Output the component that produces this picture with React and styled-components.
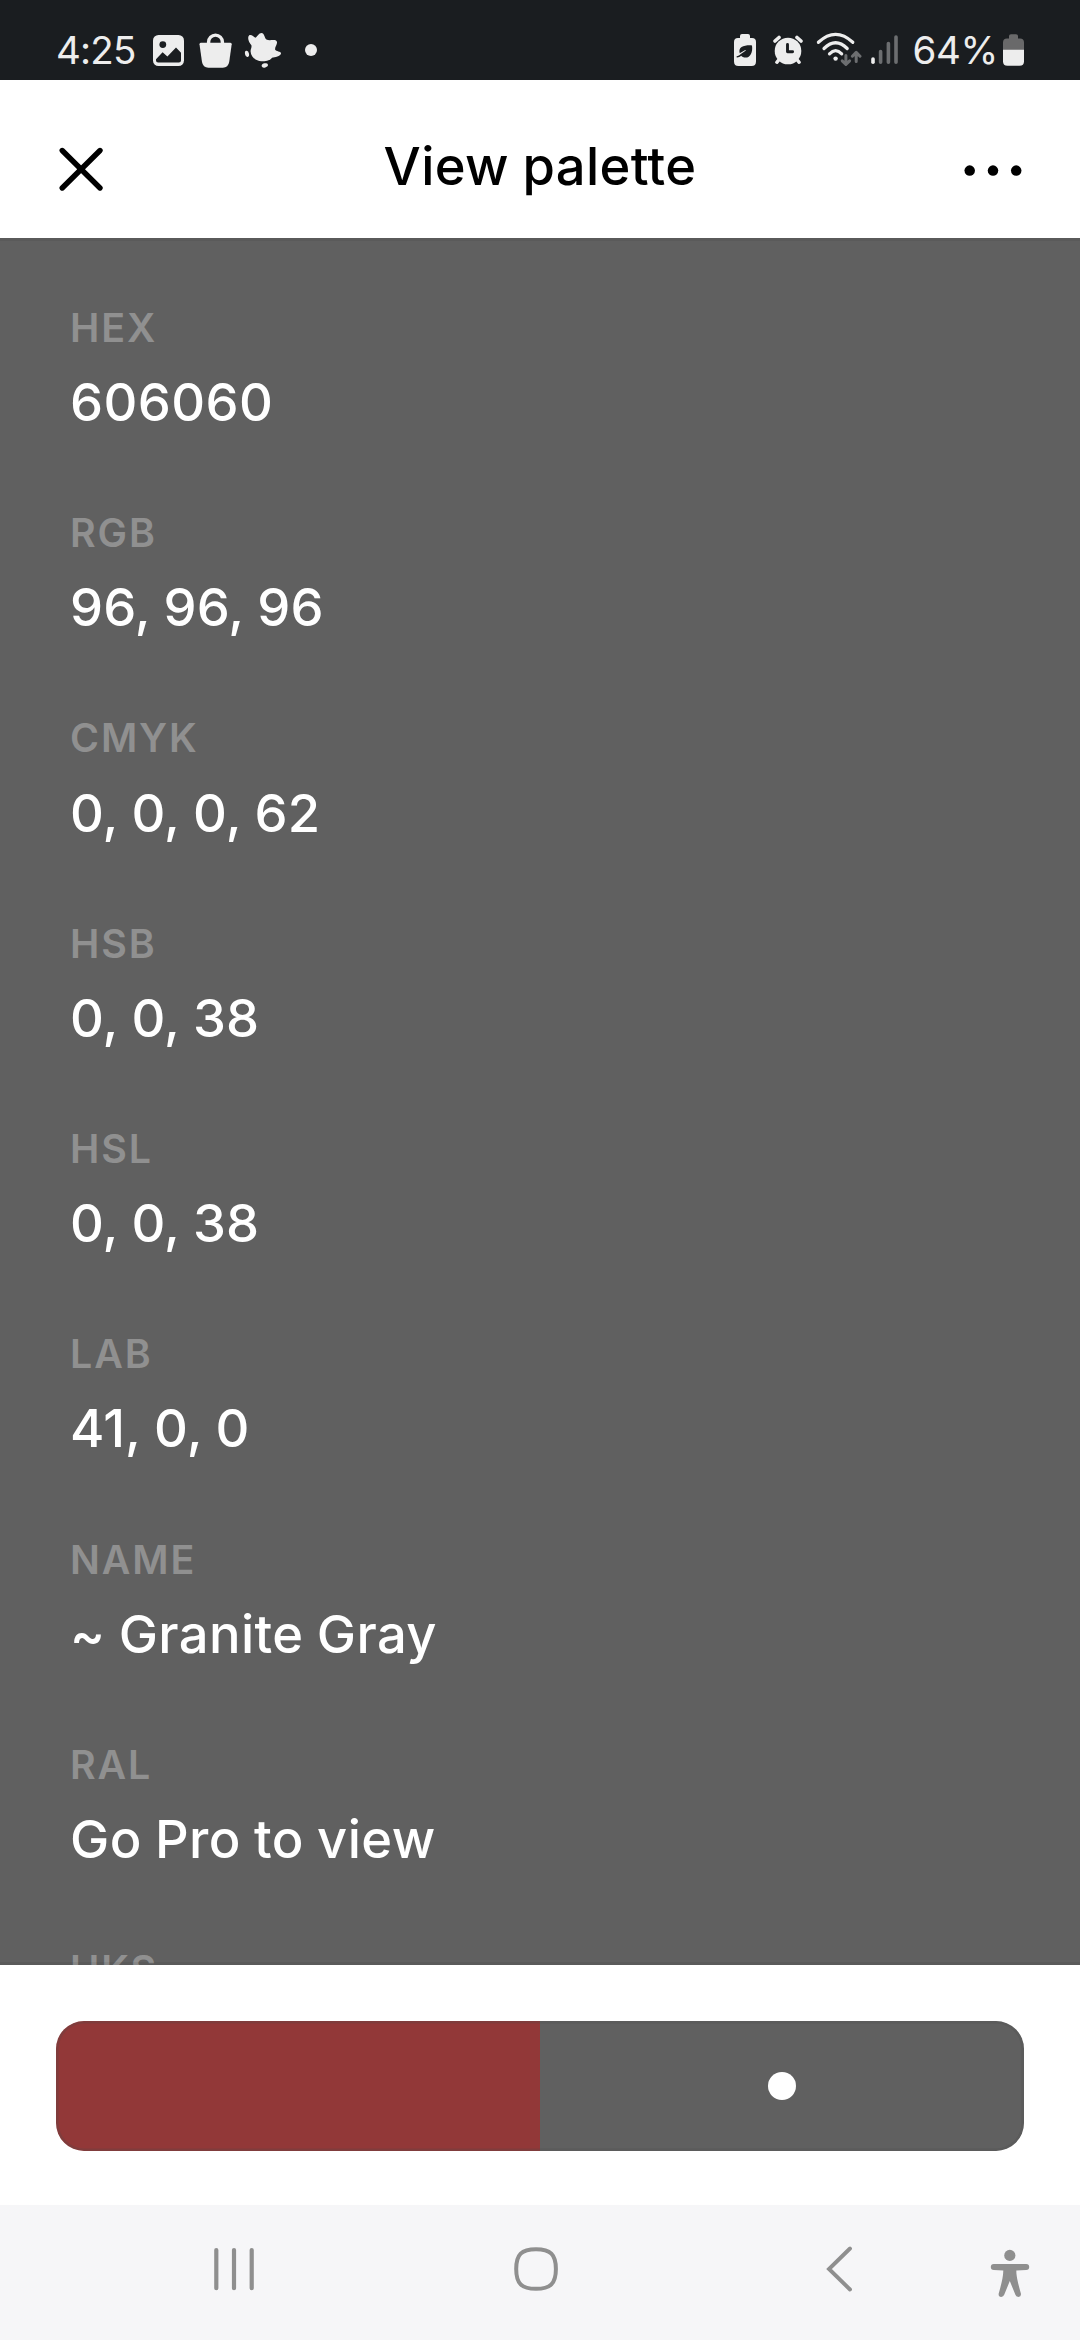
import React from "react";
import styled, { createGlobalStyle } from "styled-components";

const GlobalStyle = createGlobalStyle`
  *, *::before, *::after { box-sizing: border-box; }
  html, body { margin: 0; padding: 0; background: #ffffff; }
  svg { display: block; flex: none; }
  button { border: 0; padding: 0; background: none; color: inherit; }
`;

const Screen = styled.div`
  width: 1080px;
  height: 2340px;
  display: flex;
  flex-direction: column;
  overflow: hidden;
  background: #ffffff;
  font-family: Inter, "Liberation Sans", sans-serif;
`;

const StatusBar = styled.header`
  flex: none;
  height: 80px;
  padding: 20px 56px 0;
  display: flex;
  justify-content: space-between;
  background: #1a1d20;
  color: #ededed;
`;

const StatusGroup = styled.div`
  display: flex;
  align-items: center;
  height: 60px;
`;

const StatusText = styled.span`
  width: ${(p) => p.$width}px;
  padding-left: ${(p) => p.$inset || 0}px;
  font-size: 38.5px;
  font-weight: 400;
  line-height: 60px;
  letter-spacing: ${(p) => p.$tracking}px;
  white-space: nowrap;
`;

const StatusIcon = styled.svg`
  height: 60px;
  width: ${(p) => p.$width}px;
  margin-left: ${(p) => p.$before || 0}px;
`;

const TitleBar = styled.div`
  flex: none;
  height: 158px;
  padding: 0 55px;
  display: grid;
  grid-template-columns: 64px 1fr 64px;
  background: #ffffff;
  color: #000000;
`;

const Title = styled.h1`
  margin: 0;
  padding-top: 54px;
  text-align: center;
  font-size: 52.5px;
  font-weight: 500;
  line-height: 64px;
  letter-spacing: 0.35px;
  word-spacing: -0.8px;
`;

const BarButton = styled.button`
  display: flex;
  justify-content: ${(p) => p.$align};
  padding-top: 60px;
  height: 120px;
`;

const ColorPanel = styled.main`
  flex: none;
  height: 1727px;
  padding: 65.9px 70px 0;
  position: relative;
  overflow: hidden;
  background: #606060;
  &::after {
    content: "";
    position: absolute;
    inset: 0;
    border: solid rgba(0, 0, 0, 0.06);
    border-width: 3px 0;
    pointer-events: none;
  }
`;

const ColorList = styled.dl`
  margin: 0;
  display: flex;
  flex-direction: column;
`;

const ColorEntry = styled.div`
  flex: none;
  height: 205.285px;
  display: flex;
  flex-direction: column;
  gap: 18.15px;
`;

const EntryLabel = styled.dt`
  color: #909090;
  font-size: 39.375px;
  font-weight: 600;
  line-height: 48px;
  letter-spacing: 1.9px;
`;

const EntryValue = styled.dd`
  margin: 0;
  color: #ffffff;
  font-size: 52.5px;
  font-weight: 500;
  line-height: 64px;
  letter-spacing: ${(p) => (p.$list ? 0.12 : 0.4)}px;
  word-spacing: ${(p) => (p.$list ? -0.7 : -1.2)}px;
`;

const SwatchArea = styled.section`
  flex: none;
  height: 240px;
  padding: 56px 56px 0;
  background: #ffffff;
`;

const SwatchStrip = styled.div`
  height: 130px;
  display: flex;
  border-radius: 28px;
  overflow: hidden;
  position: relative;
  &::after {
    content: "";
    position: absolute;
    inset: 0;
    border-radius: 28px;
    box-shadow: inset 0 0 0 2.6px rgba(96, 96, 96, 0.2), inset 0 0 0 2.6px rgba(0, 0, 0, 0.06);
  }
`;

const Swatch = styled.button`
  flex: 1;
  display: flex;
  align-items: center;
  justify-content: center;
  background: ${(p) => p.$color};
`;

const SelectedDot = styled.span`
  width: 28px;
  height: 28px;
  border-radius: 50%;
  background: #ffffff;
`;

const NavBar = styled.nav`
  flex: 1;
  padding-top: 35px;
  display: flex;
  align-items: flex-start;
  background: #f6f6f8;
  color: #8f8f8f;
`;

const NavButton = styled.button`
  margin-left: ${(p) => p.$before}px;
`;

const entries = [
  { label: "HEX", value: "606060" },
  { label: "RGB", value: "96, 96, 96", list: true },
  { label: "CMYK", value: "0, 0, 0, 62", list: true },
  { label: "HSB", value: "0, 0, 38", list: true },
  { label: "HSL", value: "0, 0, 38", list: true },
  { label: "LAB", value: "41, 0, 0", list: true },
  { label: "NAME", value: "~ Granite Gray" },
  { label: "RAL", value: "Go Pro to view" },
  { label: "HKS" },
];

const swatches = [
  { color: "#923838", selected: false },
  { color: "#606060", selected: true },
];

const dark = "#1a1d20";

function PhotoIcon() {
  return (
    <StatusIcon $width={31} $before={16} viewBox="153 20 31 60" fill="currentColor">
      <rect x="153" y="35" width="31" height="31" rx="5.5" />
      <circle cx="162.8" cy="44.6" r="3.4" fill={dark} />
      <path d="M156 59.2L162.6 52.2L167.4 56.6L176 47.6L181 52.8V60.5Q181 62.6 178.9 62.6H158.1Q156 62.6 156 60.5Z" fill={dark} />
    </StatusIcon>
  );
}

function BagIcon() {
  return (
    <StatusIcon $width={33} $before={15} viewBox="199 20 33 60" fill="currentColor">
      <path d="M200.8 42.7H230.4Q231.9 42.7 231.7 44.2L229.2 62Q228.2 67.7 222.8 67.7H208.4Q203 67.7 202 62L199.5 44.2Q199.3 42.7 200.8 42.7Z" />
      <path d="M208.6 43.5V42A6.9 6.9 0 0 1 222.4 42V43.5" fill="none" stroke="currentColor" strokeWidth="3.4" />
    </StatusIcon>
  );
}

function SplatIcon() {
  return (
    <StatusIcon $width={37} $before={12} viewBox="244 20 37 60" fill="currentColor">
      <path d="M249.2 35.2C251.3 34.2 253.6 36.4 255.4 37.8C257.5 36.5 258.6 33 261.6 33C264.3 33.2 264.3 37.4 266.4 39.6C269.8 41.3 275.4 38.6 276.8 41.4C278 44.2 274.4 47 275.2 49.8C276 51.8 281.2 51 281 53.6C280.5 56.6 274.8 57.2 272 57.8C270.5 60.5 265.5 61.6 261.4 61.2C255.4 60.8 250.8 56.4 250.6 51.4C250.4 49.2 252 47.4 251.4 45.2C248.6 42.6 247 37.4 249.2 35.2Z" />
      <ellipse cx="247" cy="53.9" rx="2" ry="3.1" transform="rotate(-12 247 53.9)" />
      <ellipse cx="264.8" cy="65.4" rx="3.2" ry="2.1" transform="rotate(-15 264.8 65.4)" />
    </StatusIcon>
  );
}

function MoreDotIcon() {
  return (
    <StatusIcon $width={12} $before={24} viewBox="305 20 12 60" fill="currentColor">
      <circle cx="311" cy="50" r="6" />
    </StatusIcon>
  );
}

function LeafBatteryIcon() {
  return (
    <StatusIcon $width={22} viewBox="734 20 22 60" fill="currentColor">
      <path d="M740 36Q740 34 742 34H748Q750 34 750 36V38H752Q756 38 756 42V61.5Q756 66 751.5 66H738.5Q734 66 734 61.5V42Q734 38 738 38H740Z" />
      <path d="M752 45.4C753 52 750.4 57.6 745.6 57.6C743.6 57.6 742 56.8 741.2 55.7C739.7 57 738.3 57.5 736.7 57.4L736.6 56.3C738.3 56 739.6 55.2 740.5 54.2L745.9 50.6L745.3 50L739.7 53.2C738 46.8 744 45 752 45.4Z" fill={dark} />
    </StatusIcon>
  );
}

function AlarmIcon() {
  return (
    <StatusIcon $width={30} $before={17} viewBox="773 20 30 60" fill="none" stroke="currentColor" strokeLinecap="round">
      <circle cx="788" cy="51" r="13.3" fill="currentColor" stroke="none" />
      <path d="M775 41L779 37.5M801 41L797 37.5" strokeWidth="3.6" />
      <path d="M779.5 59L776.8 62.3M796.5 59L799.2 62.3" strokeWidth="3.4" />
      <path d="M787.5 44.5V51.8H792.6" stroke={dark} strokeWidth="2.9" strokeLinejoin="round" />
    </StatusIcon>
  );
}

function WifiIcon() {
  return (
    <StatusIcon $width={46} $before={13} viewBox="816 20 46 60" fill="none" stroke="currentColor" strokeLinecap="round" strokeLinejoin="round">
      <path d="M818.4 42.3Q835.6 26.5 852.8 42.3" strokeWidth="3.2" />
      <path d="M824 48.5Q835.6 37 847.2 48.5" strokeWidth="3.2" />
      <path d="M829.5 53.8Q835.6 47.5 841.7 53.8" strokeWidth="3.2" />
      <circle cx="835.6" cy="58.6" r="2.2" fill="currentColor" stroke="none" />
      <g stroke="#6c6e70" strokeWidth="3">
        <path d="M845.9 55.5V64M842.2 60.8L845.9 64.4L849.6 60.8" />
        <path d="M856.2 61.5V52.5M852.4 56.2L856.2 52.4L860 56.2" />
      </g>
    </StatusIcon>
  );
}

function SignalIcon() {
  return (
    <StatusIcon $width={28} $before={9} viewBox="871 20 28 60" fill="none" stroke="#6c6e70" strokeWidth="3.6" strokeLinecap="round">
      <path d="M873 59V62.3" stroke="currentColor" />
      <path d="M880.6 51.5V62.3M888.4 43.5V62.3M896 37V62.3" />
    </StatusIcon>
  );
}

function BatteryIcon() {
  return (
    <StatusIcon $width={21} $before={7} viewBox="1003 20 21 60">
      <path d="M1009 36Q1009 34.3 1011 34.3H1016Q1018 34.3 1018 36V38.5H1020Q1024 38.5 1024 42.5V50H1003V42.5Q1003 38.5 1007 38.5H1009Z" fill="#69696a" />
      <path d="M1003 49.7H1024V61.5Q1024 65.7 1019.5 65.7H1007.5Q1003 65.7 1003 61.5Z" fill="currentColor" />
    </StatusIcon>
  );
}

function CloseIcon() {
  return (
    <svg width="50" height="60" viewBox="55 140 50 60" fill="none" stroke="currentColor" strokeWidth="5.4" strokeLinecap="round">
      <path d="M62.2 150.5L100 188M100 150.5L62.2 188" />
    </svg>
  );
}

function EllipsisIcon() {
  return (
    <svg width="64" height="60" viewBox="961 140 64 60" fill="currentColor">
      <circle cx="969.7" cy="170.6" r="5.25" />
      <circle cx="993" cy="170.6" r="5.25" />
      <circle cx="1016.2" cy="170.6" r="5.25" />
    </svg>
  );
}

function RecentsIcon() {
  return (
    <svg width="42" height="60" viewBox="213 2240 42 60" fill="none" stroke="currentColor" strokeWidth="4.2" strokeLinecap="round">
      <path d="M216.3 2250V2288.2M234 2250V2288.2M251.7 2250V2288.2" />
    </svg>
  );
}

function HomeIcon() {
  return (
    <svg width="46" height="60" viewBox="513 2240 46 60" fill="none" stroke="currentColor" strokeWidth="4">
      <path d="M536 2249.2C550.5 2249.2 555.9 2254.5 555.9 2269C555.9 2283.5 550.5 2288.8 536 2288.8C521.5 2288.8 516.2 2283.5 516.2 2269C516.2 2254.5 521.5 2249.2 536 2249.2Z" />
    </svg>
  );
}

function BackIcon() {
  return (
    <svg width="28" height="60" viewBox="825 2240 28 60" fill="none" stroke="currentColor" strokeWidth="3.9" strokeLinecap="round">
      <path d="M850 2248.5L829 2269L850 2289.5" />
    </svg>
  );
}

function AccessibilityIcon() {
  return (
    <svg width="40" height="60" viewBox="990 2240 40 60" fill="currentColor">
      <circle cx="1009.8" cy="2255.4" r="5.6" />
      <path d="M993.8 2264H1026.2A2.9 2.9 0 0 1 1026.2 2270L1016.3 2270.6C1016.3 2277 1018.5 2285 1020.9 2293.5Q1021.4 2296.8 1018.4 2296.9Q1016.2 2296.9 1015.4 2294.8L1009.8 2281L1004.2 2294.8Q1003.4 2296.9 1001.2 2296.9Q998.2 2296.8 998.7 2293.5C1001.1 2285 1003.3 2277 1003.3 2270.6L993.8 2270A2.9 2.9 0 0 1 993.8 2264Z" />
    </svg>
  );
}

export default function App() {
  return (
    <Screen>
      <GlobalStyle />
      <StatusBar>
        <StatusGroup>
          <StatusText $width={81} $tracking={-0.8}>4:25</StatusText>
          <PhotoIcon />
          <BagIcon />
          <SplatIcon />
          <MoreDotIcon />
        </StatusGroup>
        <StatusGroup>
          <LeafBatteryIcon />
          <AlarmIcon />
          <WifiIcon />
          <SignalIcon />
          <StatusText $width={97} $inset={13.5} $tracking={-0.4}>64%</StatusText>
          <BatteryIcon />
        </StatusGroup>
      </StatusBar>

      <TitleBar>
        <BarButton $align="flex-start" aria-label="Close"><CloseIcon /></BarButton>
        <Title>View palette</Title>
        <BarButton $align="flex-end" aria-label="More options"><EllipsisIcon /></BarButton>
      </TitleBar>

      <ColorPanel>
        <ColorList>
          {entries.map(({ label, value, list }) => (
            <ColorEntry key={label}>
              <EntryLabel>{label}</EntryLabel>
              {value && <EntryValue $list={list}>{value}</EntryValue>}
            </ColorEntry>
          ))}
        </ColorList>
      </ColorPanel>

      <SwatchArea>
        <SwatchStrip>
          {swatches.map(({ color, selected }) => (
            <Swatch key={color} $color={color} aria-label={color}>
              {selected && <SelectedDot />}
            </Swatch>
          ))}
        </SwatchStrip>
      </SwatchArea>

      <NavBar>
        <NavButton $before={213} aria-label="Recents"><RecentsIcon /></NavButton>
        <NavButton $before={258} aria-label="Home"><HomeIcon /></NavButton>
        <NavButton $before={266} aria-label="Back"><BackIcon /></NavButton>
        <NavButton $before={137} aria-label="Accessibility"><AccessibilityIcon /></NavButton>
      </NavBar>
    </Screen>
  );
}
